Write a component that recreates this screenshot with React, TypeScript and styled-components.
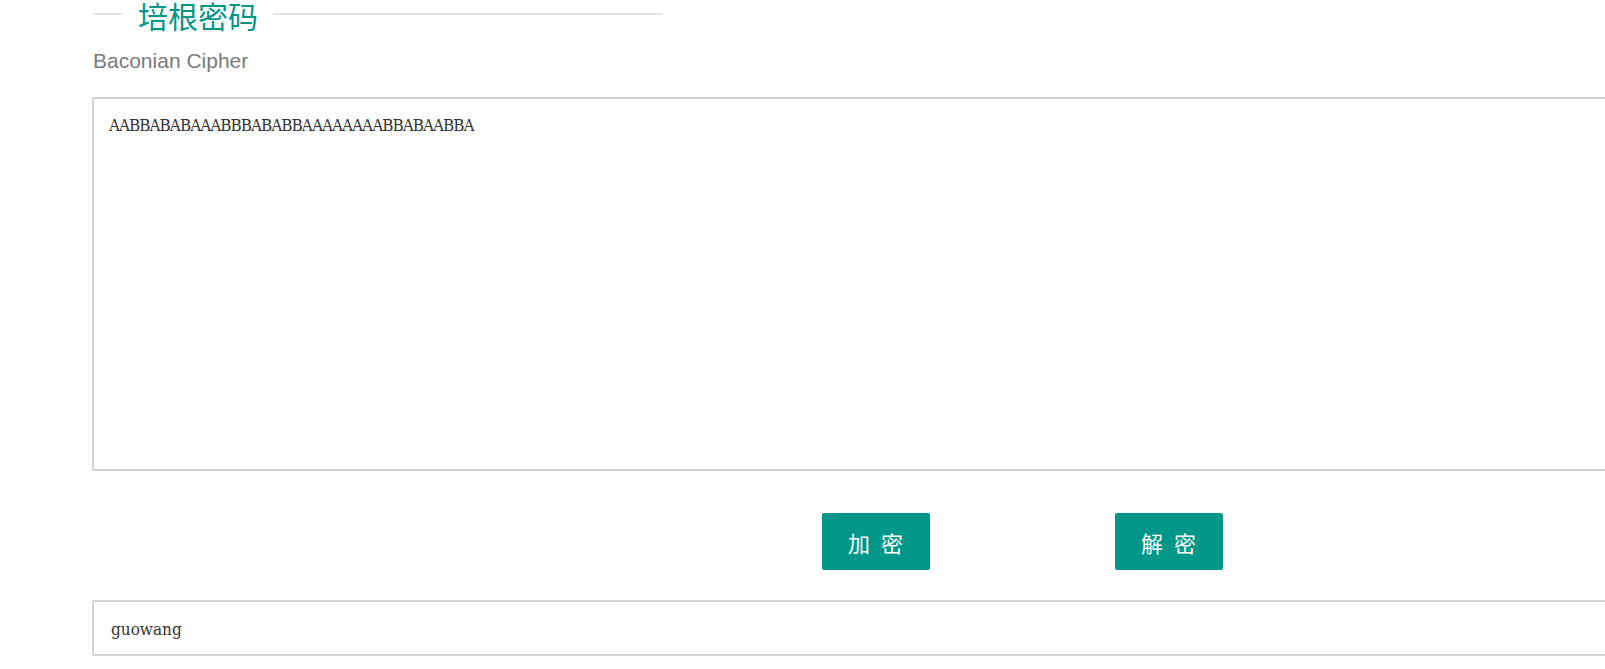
import { useState } from 'react';
import styled, { createGlobalStyle } from 'styled-components';

const GlobalStyle = createGlobalStyle`
  html, body {
    margin: 0;
    padding: 0;
    background: #fff;
    overflow: hidden;
  }
`;

function App() {
  const [cipher, setCipher] = useState('AABBABABAAABBBABABBAAAAAAAABBABAABBA');
  const [plain, setPlain] = useState('guowang');

  return (
    <>
      <GlobalStyle />
      <Container>
        <Legend>
          <Line $width="30px" />
          <Title>培根密码</Title>
          <Line $grow />
        </Legend>
        <Subtitle>Baconian Cipher</Subtitle>
        <CipherBox value={cipher} onChange={(e) => setCipher(e.target.value)} />
        <Actions>
          <ActionButton type="button">加 密</ActionButton>
          <ActionButton type="button">解 密</ActionButton>
        </Actions>
        <PlainInput value={plain} onChange={(e) => setPlain(e.target.value)} />
      </Container>
    </>
  );
}

export default App;

const Container = styled.div`
  width: 1860px;
  margin-left: 92px;
`;

const Legend = styled.div`
  width: 570px;
  height: 30px;
  display: flex;
  align-items: center;
`;

const Line = styled.span<{ $width?: string; $grow?: boolean }>`
  display: block;
  height: 2px;
  margin-bottom: 2px;
  margin-left: ${(props) => (props.$grow ? '0' : '1px')};
  background: #e4e4e4;
  width: ${(props) => props.$width || 'auto'};
  flex: ${(props) => (props.$grow ? '1' : 'none')};
`;

const Title = styled.h2`
  margin: 0;
  padding: 0 15px;
  font-family: 'Noto Sans CJK SC', 'Liberation Sans', sans-serif;
  font-size: 30px;
  font-weight: 400;
  line-height: 30px;
  color: #009688;
`;

const Subtitle = styled.p`
  margin: 19px 0 0 1px;
  font-family: 'Liberation Sans', Arial, sans-serif;
  font-size: 21px;
  line-height: 24px;
  color: #7a7a7a;
`;

const CipherBox = styled.textarea`
  display: block;
  box-sizing: border-box;
  width: 100%;
  height: 374px;
  margin-top: 24px;
  padding: 16px 15px;
  border: 2px solid #d2d2d2;
  border-radius: 2px;
  outline: none;
  resize: none;
  font-family: 'DejaVu Serif', 'Liberation Serif', serif;
  font-stretch: condensed;
  font-size: 17px;
  line-height: 20px;
  letter-spacing: -1px;
  color: #333;
  background: #fff;
`;

const Actions = styled.div`
  display: flex;
  justify-content: center;
  gap: 185px;
  margin: 42px 0 30px;
`;

const ActionButton = styled.button`
  width: 108px;
  height: 57px;
  padding: 0;
  border: none;
  border-radius: 2px;
  background: #009688;
  color: #fff;
  font-family: 'Noto Sans CJK SC', 'Liberation Sans', sans-serif;
  font-size: 22px;
  letter-spacing: 3px;
  text-indent: 3px;
  cursor: pointer;
  display: flex;
  align-items: center;
  justify-content: center;
`;

const PlainInput = styled.input`
  display: block;
  box-sizing: border-box;
  width: 100%;
  height: 56px;
  padding: 1px 15px 0 17px;
  border: 2px solid #d2d2d2;
  border-radius: 2px;
  outline: none;
  font-family: 'DejaVu Serif', 'Liberation Serif', serif;
  font-stretch: condensed;
  font-size: 17px;
  color: #333;
  background: #fff;
`;
